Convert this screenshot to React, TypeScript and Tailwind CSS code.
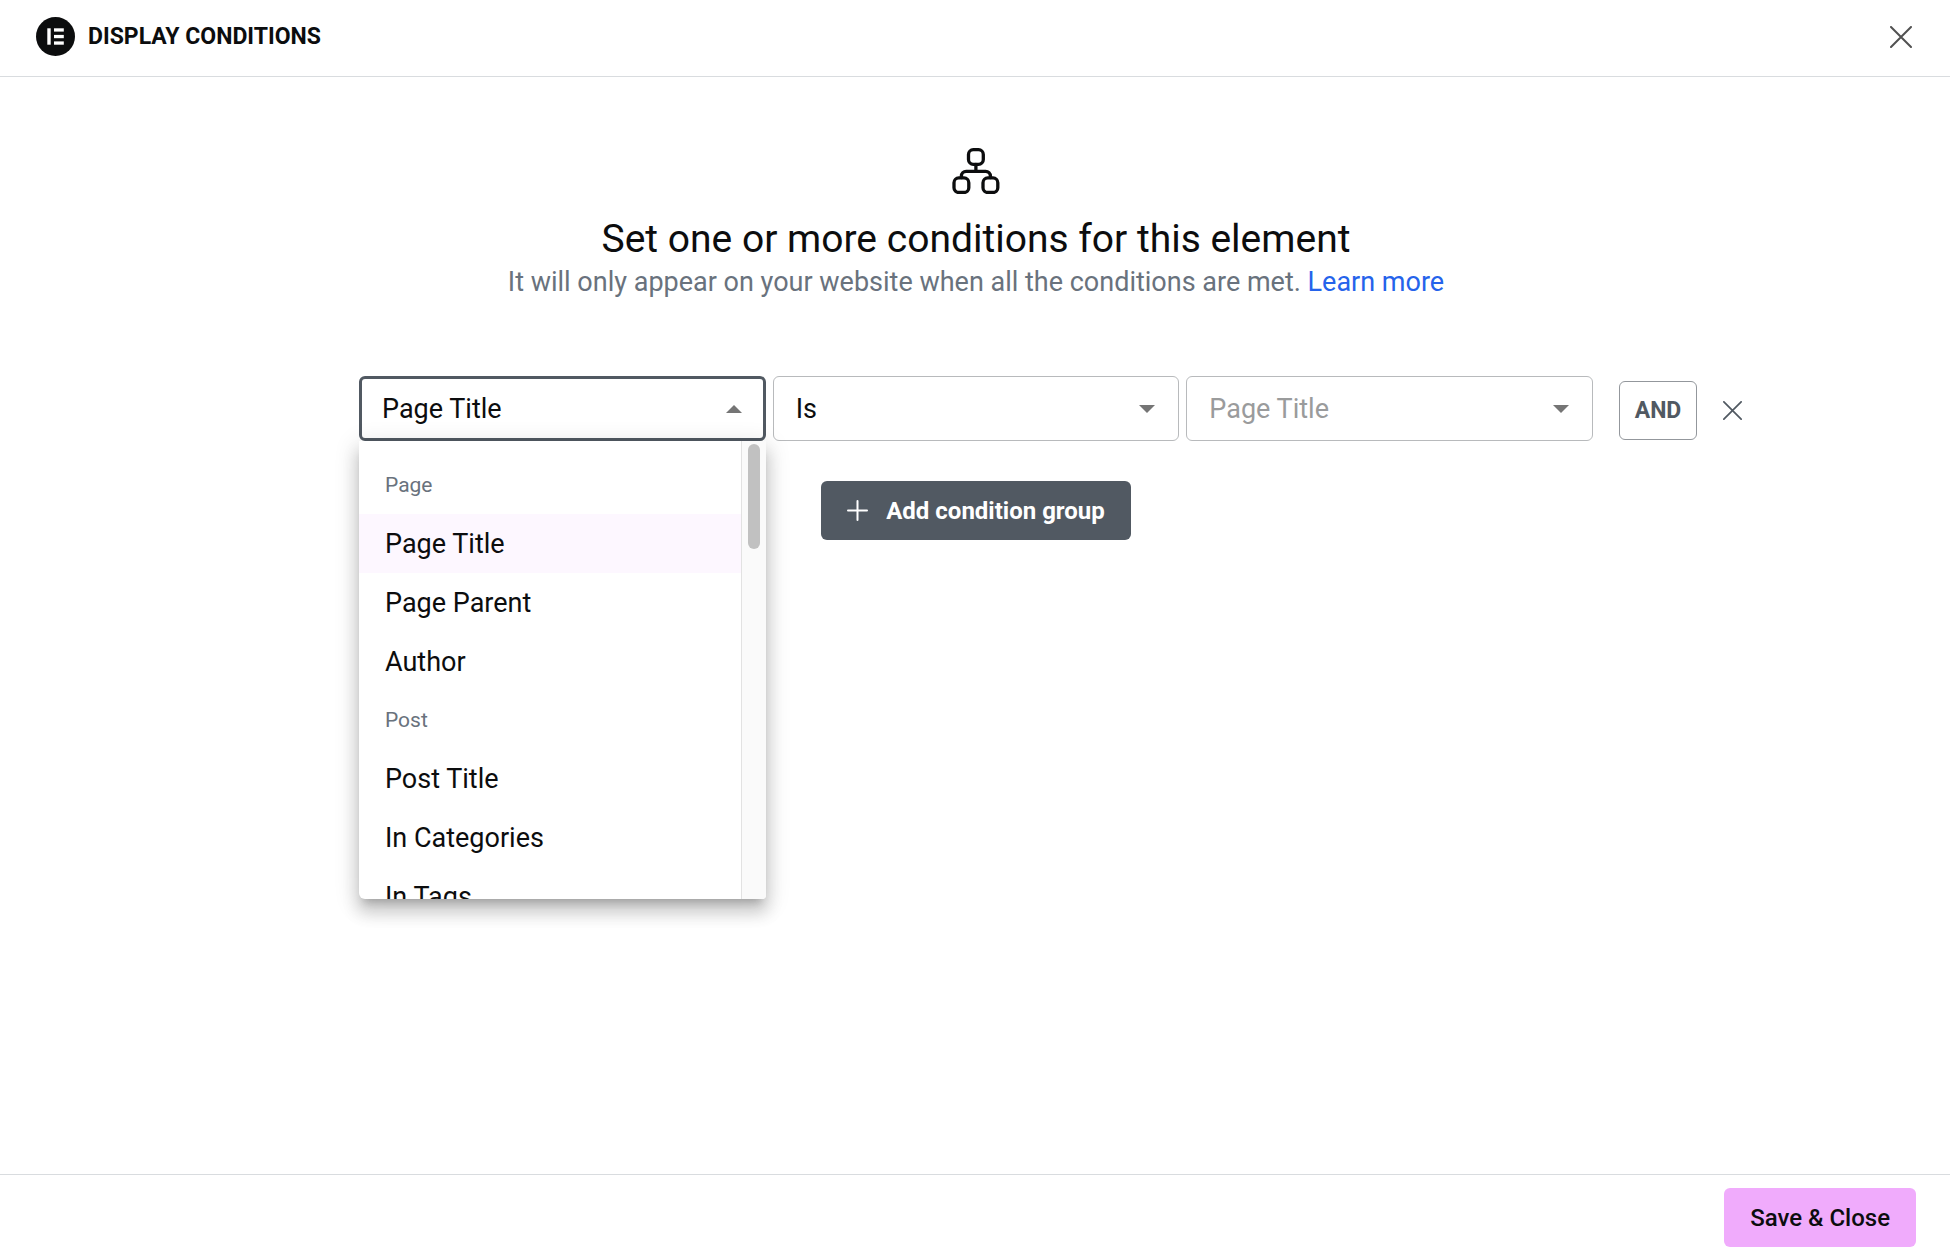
import React, { useState } from 'react';

const groups = [
  { label: 'Page', options: ['Page Title', 'Page Parent', 'Author'] },
  { label: 'Post', options: ['Post Title', 'In Categories', 'In Tags'] },
];

function Logo() {
  return (
    <svg className="w-[39px] h-[39px]" viewBox="0 0 39 39" aria-hidden="true">
      <circle cx="19.5" cy="19.5" r="19.5" fill="#0c0d0e" />
      <g fill="#fff">
        <rect x="11.3" y="11.3" width="3.4" height="16.4" />
        <rect x="18" y="11.3" width="9.8" height="3.3" />
        <rect x="18" y="17.9" width="9.8" height="3.3" />
        <rect x="18" y="24.4" width="9.8" height="3.3" />
      </g>
    </svg>
  );
}

function SitemapIcon() {
  return (
    <svg
      className="w-12 h-[46px]"
      viewBox="0 0 48 46"
      fill="none"
      stroke="#0c0d0e"
      strokeWidth="3.3"
      strokeLinecap="round"
      aria-hidden="true"
    >
      <rect x="16.5" y="1.7" width="14.8" height="14.6" rx="4.8" />
      <rect x="2" y="29.9" width="14.8" height="14.6" rx="4.8" />
      <rect x="31" y="29.9" width="14.8" height="14.6" rx="4.8" />
      <path d="M23.9 16.5v6.8M9.4 29.5v-1.4a4.8 4.8 0 0 1 4.8-4.8h19.4a4.8 4.8 0 0 1 4.8 4.8v1.4" />
    </svg>
  );
}

function CloseIcon({ className }: { className: string }) {
  return (
    <svg className={className} viewBox="0 0 22 22" fill="none" stroke="currentColor" strokeWidth="2" strokeLinecap="round" aria-hidden="true">
      <path d="M1 1l20 20M21 1L1 21" />
    </svg>
  );
}

function Caret({ up }: { up?: boolean }) {
  return (
    <svg className="pointer-events-none absolute right-6 top-[29px] w-4 h-2" viewBox="0 0 16 8" fill="#757575" aria-hidden="true">
      <path d={up ? 'M0 8L8 0l8 8z' : 'M0 0l8 8 8-8z'} />
    </svg>
  );
}

interface OptionsMenuProps {
  value: string;
  onSelect: (value: string) => void;
}

function OptionsMenu({ value, onSelect }: OptionsMenuProps) {
  return (
    <div className="absolute left-0 right-0 top-full z-10 flex h-[458px] overflow-hidden rounded-bl-md rounded-br-sm bg-white shadow-[0_8px_8px_-5px_rgba(0,0,0,0.2),0_13px_16px_2px_rgba(0,0,0,0.14),0_5px_23px_3px_rgba(0,0,0,0.12)]">
      <div role="listbox" aria-label="Condition" className="flex-1 overflow-hidden pt-[15px]">
        {groups.map((group) => (
          <div key={group.label} role="group" aria-label={group.label}>
            <div className="flex h-[58px] items-center px-[26px] pt-0.5 text-[21px] text-[#69727d]">{group.label}</div>
            {group.options.map((option) => (
              <div
                key={option}
                role="option"
                aria-selected={option === value}
                onClick={() => onSelect(option)}
                className={`flex h-[59px] cursor-pointer items-center px-[26px] pt-0.5 text-[27px] ${
                  option === value ? 'bg-[#fdf7ff]' : 'hover:bg-gray-50'
                }`}
              >
                {option}
              </div>
            ))}
          </div>
        ))}
      </div>
      <div className="w-[25px] border-l border-[#e2e2e2] bg-[#fafafa] pl-[6px] pt-[3px]">
        <div className="h-[105px] w-3 rounded-full bg-[#c1c1c1]" />
      </div>
    </div>
  );
}

const selectClasses = 'block h-[65px] w-full appearance-none rounded-md bg-white pt-0.5 pr-14 text-[27px] outline-none';

export default function App() {
  const [condition, setCondition] = useState('Page Title');
  const [open, setOpen] = useState(true);

  return (
    <div className="flex min-h-screen flex-col bg-white font-['Roboto',sans-serif] text-[#0c0d0e]">
      <header className="flex items-center justify-between border-b border-[#d9dcdf] pt-[17px] pb-5 pl-9 pr-[38px]">
        <div className="flex items-center gap-[13px]">
          <Logo />
          <h1 className="text-[23px] leading-[39px] font-bold">DISPLAY CONDITIONS</h1>
        </div>
        <button type="button" aria-label="Close" className="text-[#515151]">
          <CloseIcon className="w-[22px] h-[22px]" />
        </button>
      </header>

      <main className="flex flex-1 flex-col items-center pt-[71px] pl-0.5">
        <SitemapIcon />
        <h2 className="mt-[21px] text-[39px] leading-[48px]">Set one or more conditions for this element</h2>
        <p className="text-[27px] leading-[38px] text-[#69727d]">
          It will only appear on your website when all the conditions are met.{' '}
          <a href="#learn-more" className="text-[#2563eb]">
            Learn more
          </a>
        </p>

        <div className="mt-[75px] grid w-full grid-cols-[1fr_minmax(0,1234px)_1fr]">
          <div className="col-start-2 grid grid-cols-3 gap-[7px]">
            <div className="relative">
              <select
                aria-label="Condition"
                value={condition}
                onMouseDown={(e) => {
                  e.preventDefault();
                  setOpen(!open);
                }}
                onChange={(e) => setCondition(e.target.value)}
                className={`${selectClasses} border-[3px] border-[#515962] pl-5`}
              >
                {groups.map((group) => (
                  <optgroup key={group.label} label={group.label}>
                    {group.options.map((option) => (
                      <option key={option}>{option}</option>
                    ))}
                  </optgroup>
                ))}
              </select>
              <Caret up={open} />
              {open && (
                <OptionsMenu
                  value={condition}
                  onSelect={(option) => {
                    setCondition(option);
                    setOpen(false);
                  }}
                />
              )}
            </div>
            <div className="relative">
              <select aria-label="Comparison" className={`${selectClasses} border border-[#b8babc] pl-[22px]`}>
                <option>Is</option>
                <option>Is not</option>
              </select>
              <Caret />
            </div>
            <div className="relative">
              <select
                aria-label="Value"
                defaultValue=""
                className={`${selectClasses} border border-[#b8babc] pl-[22px] text-[#9a9b9c]`}
              >
                <option value="" disabled>
                  Page Title
                </option>
              </select>
              <Caret />
            </div>
          </div>
          <div className="flex items-center gap-[26px] pl-[26px] pt-[3px]">
            <button
              type="button"
              className="h-[59px] w-[78px] rounded-md border border-[#93979c] pt-0.5 text-[23px] font-bold text-[#515962]"
            >
              AND
            </button>
            <button type="button" aria-label="Remove condition" className="text-[#515962]">
              <CloseIcon className="w-[19px] h-[19px]" />
            </button>
          </div>
        </div>

        <button
          type="button"
          className="mt-10 flex h-[59px] items-center gap-[18px] rounded-md bg-[#515962] px-[26px] text-[24px] font-bold text-white"
        >
          <svg className="w-[21px] h-[21px]" viewBox="0 0 21 21" fill="none" stroke="currentColor" strokeWidth="2" strokeLinecap="round" aria-hidden="true">
            <path d="M10.5 1v19M1 10.5h19" />
          </svg>
          Add condition group
        </button>
      </main>

      <footer className="flex justify-end border-t border-[#d9dcdf] py-[13px] pr-[34px]">
        <button type="button" className="h-[59px] rounded-md bg-[#f0abfc] px-[26px] text-[24px] font-medium">
          Save &amp; Close
        </button>
      </footer>
    </div>
  );
}
